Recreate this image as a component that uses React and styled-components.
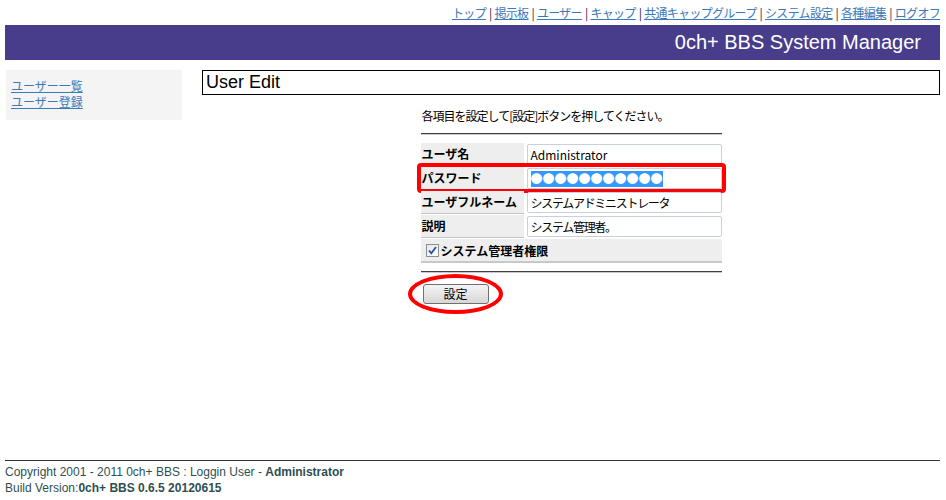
import React from "react";
import styled, { createGlobalStyle } from "styled-components";

const GlobalStyle = createGlobalStyle`
  html, body { margin: 0; padding: 0; background: #fff; }
  body {
    padding: 5px 6px 0 5px;
    font-family: "Liberation Sans", "Noto Sans CJK JP", sans-serif;
    font-size: 12px;
    color: #000;
  }
`;

const TopNav = styled.div`
  height: 16px;
  line-height: 16px;
  margin-bottom: 4px;
  text-align: right;
  font-family: "Noto Sans CJK JP", sans-serif;
  font-size: 12px;
  letter-spacing: -0.7px;
  white-space: nowrap;
`;

const NavLink = styled.a`
  color: #3b79b7;
  text-decoration: underline;
`;

const Sep = styled.span`
  color: #3a1438;
  margin: 0 3px 0 3px;
`;

const HeaderBar = styled.div`
  height: 35px;
  background: #483d8b;
  color: #fff;
  display: flex;
  align-items: center;
  justify-content: flex-end;
  padding-right: 19px;
  font-family: "Liberation Sans", sans-serif;
  font-size: 20px;
`;

const Main = styled.div`
  display: flex;
  gap: 20px;
  margin-top: 10px;
  min-height: 380px;
  align-items: flex-start;
`;

const Sidebar = styled.div`
  width: 176px;
  height: 50px;
  margin-left: 1px;
  background: #f4f4f4;
  padding: 8px 5px 0;
  box-sizing: border-box;
  display: flex;
  flex-direction: column;
  font-family: "Noto Sans CJK JP", sans-serif;
`;

const SideLink = styled.a`
  display: block;
  height: 16px;
  color: #3b79b7;
  text-decoration: underline;
  line-height: 16px;
  font-size: 12px;
`;

const Content = styled.div`
  flex: 1;
`;

const PageTitle = styled.div`
  border: 1px solid #000;
  height: 25px;
  box-sizing: border-box;
  line-height: 22px;
  padding-left: 3px;
  font-family: "Liberation Sans", sans-serif;
  font-size: 18px;
`;

const Form = styled.div`
  width: 301px;
  margin: 0 auto;
  font-family: "Noto Sans CJK JP", sans-serif;
`;

const Instruction = styled.div`
  margin-top: 13px;
  line-height: 16px;
  padding-left: 1px;
  font-size: 12px;
  letter-spacing: -1px;
`;

const Rule = styled.div`
  height: 1px;
  background: #404040;
  border-bottom: 1px solid #c8c8c8;
  margin-top: ${(p) => p.$top}px;
`;

const Rows = styled.div`
  margin-top: 8px;
  display: flex;
  flex-direction: column;
`;

const Row = styled.div`
  position: relative;
  display: grid;
  grid-template-columns: 103px 1fr;
  column-gap: 3px;
  height: 24px;
`;

const Label = styled.div`
  background: #eeeeee;
  height: 22px;
  border-bottom: 1px solid #c4c4c4;
  font-weight: bold;
  font-size: 12px;
  line-height: 21px;
  padding-left: 1px;
  white-space: nowrap;
`;

const Field = styled.div`
  height: 21px;
  margin-top: 1px;
  box-sizing: border-box;
  border: 1px solid #c9d0dd;
  border-radius: 2px;
  padding-left: 3px;
  font-size: 12px;
  line-height: 19px;
  letter-spacing: ${(p) => (p.$tight ? "-1.3px" : "0")};
  white-space: nowrap;
  overflow: hidden;
`;

const Selected = styled.span`
  background: #3399ff;
  color: #fff;
  font-size: 12px;
  line-height: 16px;
  display: inline-block;
  margin-top: 1px;
`;

const Highlight = styled.div`
  position: absolute;
  top: -4px;
  left: -4px;
  right: -4px;
  bottom: -2px;
  border: 4px solid #ff0000;
  border-radius: 4px;
  pointer-events: none;
`;

const CheckRow = styled.div`
  height: 22px;
  background: #eeeeee;
  border-bottom: 2px solid #c8c8c8;
  display: flex;
  align-items: center;
  gap: 2px;
  padding-left: 5px;
  font-weight: bold;
  font-size: 12px;
`;

const ButtonWrap = styled.div`
  position: relative;
  display: inline-block;
  margin: 11px 0 0 2px;
`;

const Button = styled.button`
  display: block;
  width: 66px;
  height: 20px;
  border: 1px solid #707070;
  border-radius: 3px;
  background: linear-gradient(#f4f4f4, #e6e6e6 50%, #d6d6d6);
  font-family: "Noto Sans CJK JP", sans-serif;
  font-size: 12px;
  line-height: 16px;
  padding: 0;
  color: #000;
`;

const Ellipse = styled.div`
  position: absolute;
  left: -15px;
  top: -10px;
  width: 95px;
  height: 40px;
  box-sizing: border-box;
  border: 4px solid #ff0000;
  border-radius: 50%;
  pointer-events: none;
`;

const Footer = styled.div`
  margin-top: 10px;
  border-top: 1px solid #333;
  padding-top: 3px;
  color: #2f4f4f;
  font-family: "Liberation Sans", sans-serif;
  font-size: 12px;
  line-height: 16px;
`;

const CheckIcon = () => (
  <svg width="13" height="13" viewBox="0 0 13 13">
    <defs>
      <linearGradient id="cbg" x1="0" y1="0" x2="1" y2="1">
        <stop offset="0" stopColor="#dfe6ef" />
        <stop offset="1" stopColor="#ffffff" />
      </linearGradient>
    </defs>
    <rect x="0.5" y="0.5" width="12" height="12" fill="url(#cbg)" stroke="#8e8f8f" />
    <path d="M3 6.5 L5.3 9.2 L10 3" fill="none" stroke="#2c52a0" strokeWidth="1.8" />
  </svg>
);

const navItems = ["トップ", "掲示板", "ユーザー", "キャップ", "共通キャップグループ", "システム設定", "各種編集", "ログオフ"];

export default function App() {
  return (
    <>
      <GlobalStyle />
      <TopNav>
        {navItems.map((t, i) => (
          <React.Fragment key={t}>
            {i > 0 && <Sep>|</Sep>}
            <NavLink href="#">{t}</NavLink>
          </React.Fragment>
        ))}
      </TopNav>
      <HeaderBar>0ch+ BBS System Manager</HeaderBar>
      <Main>
        <Sidebar>
          <SideLink href="#">ユーザー一覧</SideLink>
          <SideLink href="#">ユーザー登録</SideLink>
        </Sidebar>
        <Content>
          <PageTitle>User Edit</PageTitle>
          <Form>
            <Instruction>各項目を設定して[設定]ボタンを押してください。</Instruction>
            <Rule $top={9} />
            <Rows>
              <Row>
                <Label>ユーザ名</Label>
                <Field>Administrator</Field>
              </Row>
              <Row>
                <Label>パスワード</Label>
                <Field>
                  <Selected>●●●●●●●●●●●</Selected>
                </Field>
                <Highlight />
              </Row>
              <Row>
                <Label>ユーザフルネーム</Label>
                <Field $tight>システムアドミニストレータ</Field>
              </Row>
              <Row>
                <Label>説明</Label>
                <Field $tight>システム管理者。</Field>
              </Row>
              <CheckRow>
                <CheckIcon />
                システム管理者権限
              </CheckRow>
            </Rows>
            <Rule $top={8} />
            <ButtonWrap>
              <Button>設定</Button>
              <Ellipse />
            </ButtonWrap>
          </Form>
        </Content>
      </Main>
      <Footer>
        <div>
          Copyright 2001 - 2011 0ch+ BBS : Loggin User - <b>Administrator</b>
        </div>
        <div>
          Build Version:<b>0ch+ BBS 0.6.5 20120615</b>
        </div>
      </Footer>
    </>
  );
}
